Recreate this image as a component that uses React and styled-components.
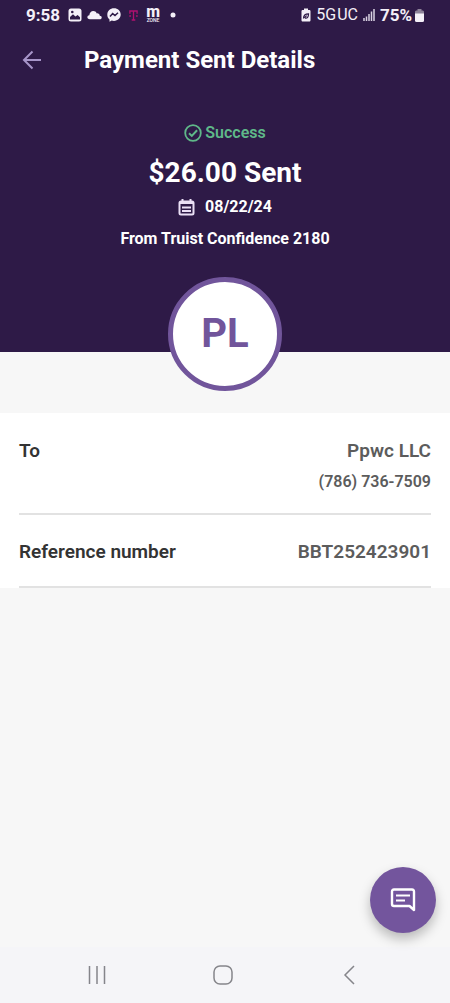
import React from "react";
import styled, { createGlobalStyle } from "styled-components";

const GlobalStyle = createGlobalStyle`
  *, *::before, *::after { box-sizing: border-box; }
  body { margin: 0; background: #f7f7f7; }
  body, button { font-family: Roboto, "Liberation Sans", sans-serif; }
  h1, h2, p, dl, dt, dd { margin: 0; }
`;

const Screen = styled.div`
  min-height: 100vh;
  display: flex;
  flex-direction: column;
  background: #f7f7f7;
`;

const Hero = styled.header`
  background: #2e1a47;
  color: #fff;
  display: flex;
  flex-direction: column;
`;

const StatusBar = styled.div`
  height: 30px;
  padding: 0 26px;
  display: flex;
  align-items: center;
  justify-content: space-between;
  color: #f4f0f8;
`;

const StatusGroup = styled.div`
  display: flex;
  align-items: center;
  gap: ${(p) => p.$gap}px;
`;

const StatusText = styled.span`
  font-size: ${(p) => p.$size}px;
  line-height: 20px;
  font-weight: ${(p) => p.$weight};
`;

const ZoneLogo = styled.span`
  display: flex;
  flex-direction: column;
  align-items: center;
  width: 14px;
  font-weight: 800;
  font-size: 16px;
  line-height: 10px;
`;

const ZoneCaption = styled.span`
  margin-top: 1px;
  font-size: 5px;
  line-height: 5px;
  font-weight: 500;
`;

const AppBar = styled.div`
  height: 60px;
  padding: 0 18px;
  display: flex;
  align-items: center;
  gap: 38px;
`;

const IconButton = styled.button`
  border: 0;
  padding: 0;
  background: none;
  color: ${(p) => p.$color};
  width: 28px;
  height: 28px;
  display: flex;
  align-items: center;
  justify-content: center;
`;

const Title = styled.h1`
  font-size: 24px;
  line-height: 28px;
  font-weight: 700;
  white-space: nowrap;
`;

const Summary = styled.section`
  padding-top: 32px;
  display: flex;
  flex-direction: column;
  align-items: center;
`;

const Status = styled.p`
  display: flex;
  align-items: center;
  gap: 3px;
  color: #5fb889;
  font-size: 16px;
  line-height: 21px;
  font-weight: 600;
`;

const Amount = styled.h2`
  margin-top: 12px;
  font-size: 28px;
  line-height: 36px;
  font-weight: 700;
`;

const DateLine = styled.p`
  margin-top: 6px;
  display: flex;
  align-items: center;
  gap: 10px;
  font-size: 16px;
  line-height: 20px;
  font-weight: 700;
`;

const Source = styled.p`
  margin-top: 12px;
  font-size: 16px;
  line-height: 20px;
  font-weight: 700;
`;

const Avatar = styled.div`
  width: 114px;
  height: 114px;
  margin-top: 28px;
  margin-bottom: -39px;
  border: 5px solid #71559b;
  border-radius: 50%;
  background: #fff;
  color: #71559b;
  display: flex;
  align-items: center;
  justify-content: center;
  font-size: 40px;
  line-height: 46px;
  font-weight: 700;
`;

const Main = styled.main`
  flex: 1;
  padding-top: 61px;
`;

const Details = styled.dl`
  background: #fff;
  padding: 0 19px;
`;

const Row = styled.div`
  display: flex;
  justify-content: space-between;
  padding: ${(p) => p.$top}px 0 ${(p) => p.$bottom}px;
  border-bottom: 2px solid #e2e2e2;
`;

const Label = styled.dt`
  color: #333;
  font-size: 19px;
  line-height: 24px;
  font-weight: 600;
`;

const Value = styled.dd`
  color: #5c5c5c;
  text-align: right;
  font-size: 19px;
  line-height: 24px;
  font-weight: 600;
`;

const Phone = styled.p`
  margin-top: 8px;
  font-size: 16px;
  line-height: 22px;
  font-weight: 600;
`;

const ChatButton = styled.button`
  position: fixed;
  right: 14px;
  bottom: 70px;
  width: 66px;
  height: 66px;
  border: 0;
  padding: 0;
  border-radius: 50%;
  background: #73559d;
  color: #fff;
  box-shadow: 0 6px 12px rgba(0, 0, 0, 0.25);
  display: flex;
  align-items: center;
  justify-content: center;
`;

const NavBar = styled.nav`
  height: 56px;
  padding: 0 38px 0 34px;
  background: #f5f5f8;
  display: flex;
  align-items: center;
`;

const NavItem = styled.div`
  flex: 1;
  display: flex;
  justify-content: center;
`;

const PhotoIcon = () => (
  <svg width="14" height="14" viewBox="0 0 14 14" aria-hidden="true">
    <rect x="0.5" y="0.5" width="13" height="13" rx="2.5" fill="#f4f0f8" />
    <path d="M2 11.5V9l3-2.8 2.4 2.2L9.6 7 12 9.2v2.3z" fill="#2e1a47" />
    <circle cx="4.3" cy="4" r="1.3" fill="#2e1a47" />
  </svg>
);

const CloudIcon = () => (
  <svg width="15" height="10" viewBox="0 0 16 10" aria-hidden="true">
    <path d="M3 9.5C1.2 9.5.4 8.5.4 7.4c0-1.2.9-2 2.1-2.1C2.7 2.7 4.4.8 6.7.8c1.7 0 3 .9 3.7 2.5 1.8-.3 3 .8 3.2 2.4 1.3.1 2.1.8 2.1 1.9s-.8 1.9-2 1.9z" fill="#f4f0f8" />
  </svg>
);

const MessengerIcon = () => (
  <svg width="14" height="14" viewBox="0 0 14 14" aria-hidden="true">
    <path d="M7 .3C3.2.3.3 3 .3 6.7c0 2 .8 3.6 2.2 4.8v2.2l2.2-1.1c.7.2 1.5.3 2.3.3 3.8 0 6.7-2.7 6.7-6.3S10.8.3 7 .3z" fill="#f4f0f8" />
    <path d="M3 8.6 5.7 5.6 8 7.5l3-2.7" fill="none" stroke="#2e1a47" strokeWidth="1.5" />
  </svg>
);

const CarrierIcon = () => (
  <svg width="9" height="11" viewBox="0 0 10 12" aria-hidden="true">
    <path d="M1 4V1h8v3M5 1v10M3 11h4" fill="none" stroke="#b0116f" strokeWidth="1.5" />
    <path d="M.3 6.500h2M7.700 6.500h2" stroke="#b0116f" strokeWidth="1.600" />
  </svg>
);

const SaverIcon = () => (
  <svg width="10" height="14" viewBox="0 0 10 14" aria-hidden="true">
    <path d="M3 .5h4v1.5h1.2c.8 0 1.3.5 1.3 1.3v8.900c0 .8-.5 1.300-1.300 1.300H1.800c-.8 0-1.300-.5-1.300-1.300V3.300C.5 2.500 1 2 1.800 2H3z" fill="#f4f0f8" />
    <path d="M2.500 10.500c0-3.500 1.500-4.600 5-4.600 0 3-1.100 4.600-3.600 4.200M3.300 9.600l2.500-2" fill="none" stroke="#2e1a47" strokeWidth="1.200" />
  </svg>
);

const SignalIcon = () => (
  <svg width="12" height="12" viewBox="0 0 12 12" aria-hidden="true">
    <path d="M1 12V9M3.500 12V7.500M6 12V5M8.500 12V2.500M11 12V0" stroke="#d9d2e2" strokeWidth="1.500" />
  </svg>
);

const BatteryIcon = () => (
  <svg width="9" height="13" viewBox="0 0 9 13" aria-hidden="true">
    <path d="M2.500 0h4v1.500H8l1 1V5H0V2.500l1-1h1.500z" fill="#8d8299" />
    <path d="M0 4.500h9v7A1.500 1.500 0 0 1 7.500 13h-6A1.500 1.500 0 0 1 0 11.500z" fill="#f4f0f8" />
  </svg>
);

const ArrowIcon = () => (
  <svg width="20" height="20" viewBox="0 0 20 20" aria-hidden="true">
    <path d="M19 10H2M10.500 1.500 2 10l8.500 8.500" fill="none" stroke="currentColor" strokeWidth="2" />
  </svg>
);

const CheckIcon = () => (
  <svg width="18" height="18" viewBox="0 0 18 18" aria-hidden="true">
    <circle cx="9" cy="9" r="7.800" fill="none" stroke="currentColor" strokeWidth="1.800" />
    <path d="m5 9.200 2.800 2.700 5.300-5.600" fill="none" stroke="currentColor" strokeWidth="2" />
  </svg>
);

const CalendarIcon = () => (
  <svg width="17" height="17" viewBox="0 0 17 17" fill="none" stroke="#eadff5" aria-hidden="true">
    <rect x="1.500" y="2.500" width="14" height="13" rx="1.500" strokeWidth="2" />
    <path d="M4.500 0v3M12.500 0v3M1 4h15" strokeWidth="2" />
    <path d="M4 8.500h9M4 12h9" strokeWidth="2" />
  </svg>
);

const ChatIcon = () => (
  <svg width="26" height="24" viewBox="0 0 26 24" fill="none" stroke="currentColor" aria-hidden="true">
    <path d="M24 22V3.500Q24 1.500 22 1.500H4Q2 1.500 2 3.500v12.500q0 2 2 2h15.500z" strokeWidth="2.400" strokeLinejoin="round" />
    <path d="M6 7.500h14M6 12.500h9" strokeWidth="2" />
  </svg>
);

const RecentsIcon = () => (
  <svg width="20" height="20" viewBox="0 0 20 20" aria-hidden="true">
    <path d="M2.500 1v18M10 1v18M17.500 1v18" stroke="currentColor" strokeWidth="1.500" />
  </svg>
);

const HomeIcon = () => (
  <svg width="20" height="20" viewBox="0 0 20 20" aria-hidden="true">
    <rect x="1" y="1" width="18" height="18" rx="6" fill="none" stroke="currentColor" strokeWidth="1.500" />
  </svg>
);

const BackIcon = () => (
  <svg width="12" height="20" viewBox="0 0 12 20" aria-hidden="true">
    <path d="M11 1 2 10l9 9" fill="none" stroke="currentColor" strokeWidth="1.500" />
  </svg>
);

const DotIcon = () => (
  <svg width="10" height="6" viewBox="0 0 10 6" aria-hidden="true">
    <circle cx="5" cy="3" r="2.500" fill="#f4f0f8" />
  </svg>
);

const navItems = [
  { name: "Recent apps", Icon: RecentsIcon },
  { name: "Home", Icon: HomeIcon },
  { name: "Back", Icon: BackIcon },
];

export default function App() {
  return (
    <>
      <GlobalStyle />
      <Screen>
        <Hero>
          <StatusBar>
            <StatusGroup $gap={8}>
              <StatusText $size={17} $weight={700}>9:58</StatusText>
              <StatusGroup $gap={5}>
                <PhotoIcon />
                <CloudIcon />
                <MessengerIcon />
              </StatusGroup>
              <CarrierIcon />
              <ZoneLogo>
                m
                <ZoneCaption>ZONE</ZoneCaption>
              </ZoneLogo>
              <DotIcon />
            </StatusGroup>
            <StatusGroup $gap={5}>
              <SaverIcon />
              <StatusGroup $gap={1}>
                <StatusText $size={16} $weight={400}>5G</StatusText>
                <StatusText $size={16} $weight={400}>UC</StatusText>
              </StatusGroup>
              <SignalIcon />
              <StatusGroup $gap={3}>
                <StatusText $size={17} $weight={700}>75%</StatusText>
                <BatteryIcon />
              </StatusGroup>
            </StatusGroup>
          </StatusBar>
          <AppBar>
            <IconButton $color="#a795c9" aria-label="Go back">
              <ArrowIcon />
            </IconButton>
            <Title>Payment Sent Details</Title>
          </AppBar>
          <Summary>
            <Status>
              <CheckIcon />
              Success
            </Status>
            <Amount>$26.00 Sent</Amount>
            <DateLine>
              <CalendarIcon />
              08/22/24
            </DateLine>
            <Source>From Truist Confidence 2180</Source>
            <Avatar>PL</Avatar>
          </Summary>
        </Hero>
        <Main>
          <Details>
            <Row $top={26} $bottom={20}>
              <Label>To</Label>
              <Value>
                Ppwc LLC
                <Phone>(786) 736-7509</Phone>
              </Value>
            </Row>
            <Row $top={25} $bottom={22}>
              <Label>Reference number</Label>
              <Value>BBT252423901</Value>
            </Row>
          </Details>
        </Main>
        <ChatButton aria-label="Open chat">
          <ChatIcon />
        </ChatButton>
        <NavBar>
          {navItems.map(({ name, Icon }) => (
            <NavItem key={name}>
              <IconButton $color="#85858a" aria-label={name}>
                <Icon />
              </IconButton>
            </NavItem>
          ))}
        </NavBar>
      </Screen>
    </>
  );
}
